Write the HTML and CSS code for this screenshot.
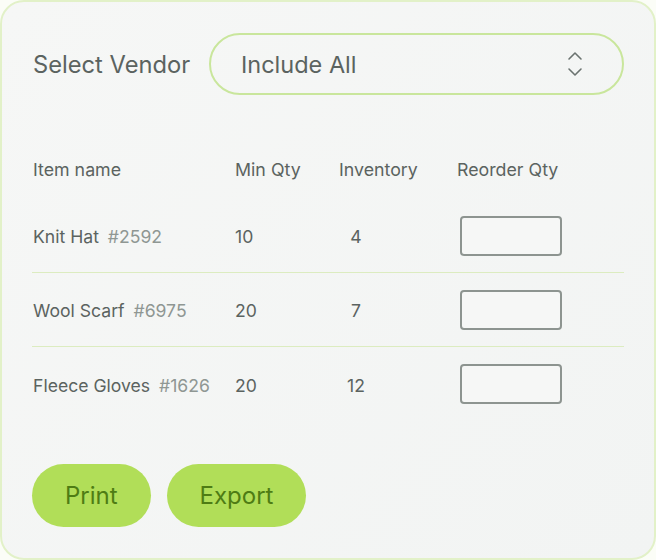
FILE: index.html
```html
<!DOCTYPE html>
<html lang="en">
<head>
<meta charset="UTF-8">
<title>Reorder</title>
<meta name="viewport" content="width=device-width, initial-scale=1.0">
<link rel="stylesheet" href="styles.css">
</head>
<body>

<div class="card">

    <!-- VENDOR -->
    <div class="vendor-row">
        <div class="vendor-label">Select Vendor</div>
        <div class="select">
            <span>Include All</span>
            <svg class="chevrons" width="18" height="30" viewBox="0 0 18 30">
                <path d="M3 10 L9 4 L15 10" fill="none" stroke="#6b7370" stroke-width="1.6" stroke-linecap="round" stroke-linejoin="round"/>
                <path d="M3 20 L9 26 L15 20" fill="none" stroke="#6b7370" stroke-width="1.6" stroke-linecap="round" stroke-linejoin="round"/>
            </svg>
        </div>
    </div>

    <!-- TABLE -->
    <div class="table">
        <div class="row head">
            <div>Item name</div>
            <div>Min Qty</div>
            <div>Inventory</div>
            <div>Reorder Qty</div>
        </div>

        <div class="row item">
            <div>Knit Hat <span class="sku">#2592</span></div>
            <div>10</div>
            <div><span class="inv">4</span></div>
            <div><div class="qty"></div></div>
        </div>

        <div class="row item">
            <div>Wool Scarf <span class="sku">#6975</span></div>
            <div>20</div>
            <div><span class="inv">7</span></div>
            <div><div class="qty"></div></div>
        </div>

        <div class="row item last">
            <div>Fleece Gloves <span class="sku">#1626</span></div>
            <div>20</div>
            <div><span class="inv">12</span></div>
            <div><div class="qty"></div></div>
        </div>
    </div>

    <!-- ACTIONS -->
    <div class="actions">
        <button class="btn">Print</button>
        <button class="btn">Export</button>
    </div>

</div>

</body>
</html>
```

FILE: styles.css
```css
body {
    margin: 0;
    background: #fbfdf7;
    font-family: Inter, "Noto Sans", sans-serif;
    color: #5b6360;
}

/* CARD */
.card {
    box-sizing: border-box;
    width: 656px;
    height: 560px;
    padding: 31px 30px 0 30px;
    border: 2px solid #e2f1c8;
    border-radius: 24px;
    background: linear-gradient(135deg, #f6f7f6, #f2f4f3);
}

/* VENDOR */
.vendor-row {
    display: flex;
    align-items: center;
}

.vendor-label {
    width: 176px;
    font-size: 23.7px;
    padding-left: 1px;
}

.select {
    flex: 1;
    box-sizing: border-box;
    height: 62px;
    display: flex;
    align-items: center;
    justify-content: space-between;
    padding: 0 38px 0 30px;
    border: 2px solid #c9e69c;
    border-radius: 31px;
    font-size: 23.5px;
}

.chevrons {
    display: block;
}

/* TABLE */
.table {
    margin-top: 48px;
}

.row {
    display: grid;
    grid-template-columns: 202px 104px 118px 1fr;
    align-items: center;
    padding-left: 1px;
    box-sizing: border-box;
}

.head {
    height: 52px;
    margin-bottom: 4px;
    font-size: 17.8px;
}

.item {
    height: 74px;
    padding-top: 2px;
    border-bottom: 1px solid #dcecc0;
    font-size: 17.6px;
}

.item.last {
    border-bottom: none;
}

.sku {
    color: #8f9793;
    margin-left: 4px;
}

.inv {
    display: inline-block;
    width: 34px;
    text-align: center;
}

.qty {
    box-sizing: border-box;
    width: 102px;
    height: 40px;
    margin-left: 3px;
    margin-bottom: 2px;
    border: 2px solid #8d9490;
    border-radius: 4px;
    background: #f6f7f6;
}

/* BUTTONS */
.actions {
    display: flex;
    gap: 16px;
    margin-top: 43px;
}

.btn {
    height: 63px;
    padding: 0 33px;
    border: none;
    border-radius: 32px;
    background: #b1de58;
    color: #4e7c14;
    font-family: Inter, "Noto Sans", sans-serif;
    font-size: 24px;
}
```
